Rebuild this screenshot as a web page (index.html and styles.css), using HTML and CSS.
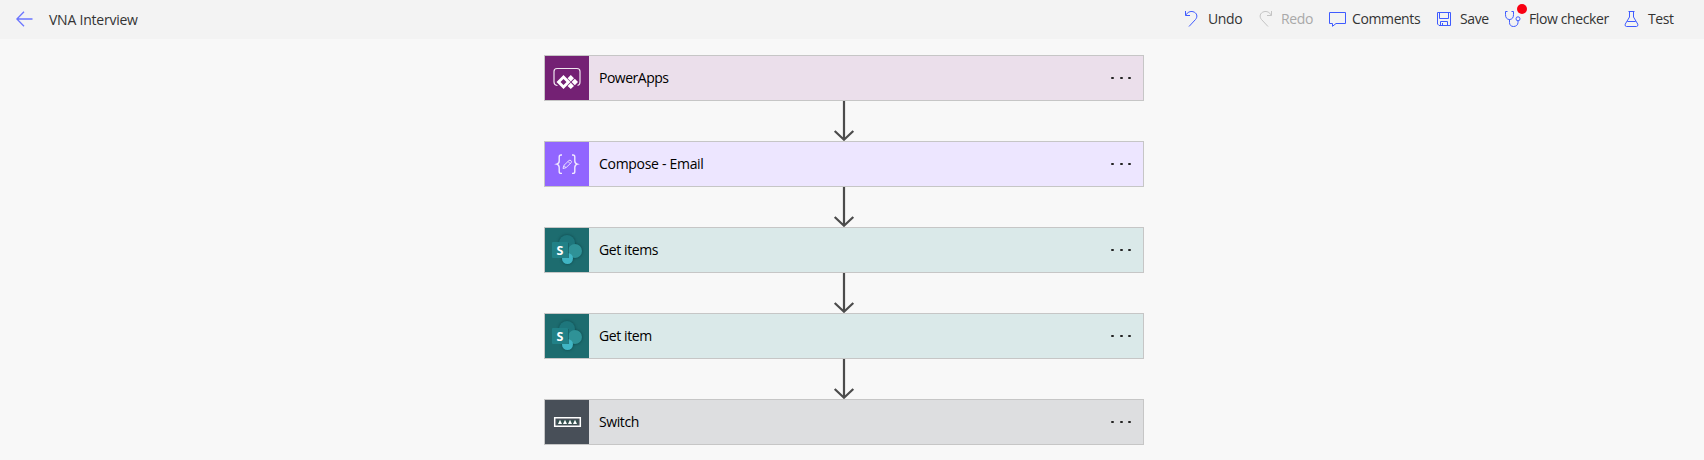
FILE: index.html
```html
<!DOCTYPE html>
<html lang="en">
<head>
<meta charset="utf-8">
<title>VNA Interview</title>
<link rel="stylesheet" href="styles.css">
</head>
<body>
<header class="topbar">
  <svg class="back" width="18" height="16" viewBox="0 0 18 16"><path d="M8 .8.9 8 8 15.2M1 8h15.500"/></svg>
  <h1 class="title">VNA Interview</h1>
  <nav class="commands">
    <button class="command undo"><svg width="18" height="18" viewBox="0 0 18 18"><path d="M1.500 1v4.500H6M1.800 5.200C3.500 2 6.500 1 9 1.700c4 1 5 5 2.500 7.800L5 16.500"/></svg><span>Undo</span></button>
    <button class="command redo"><svg width="18" height="18" viewBox="0 0 18 18"><path d="M13.500 1v4.500H9M13.200 5.200C11.500 2 8.500 1 6 1.700c-4 1-5 5-2.500 7.800l6.500 7"/></svg><span>Redo</span></button>
    <button class="command comments"><svg width="18" height="18" viewBox="0 0 18 18"><path d="M1.500 2.500h16v11H8L4.500 16.300V13.500h-3z"/></svg><span>Comments</span></button>
    <button class="command save"><svg width="18" height="18" viewBox="0 0 18 18"><path d="M1.500 2.500h13v13H3L1.500 14zM3.500 2.500v6h9v-6M4.500 15.500v-4h7v4M6.500 13v2.500"/></svg><span>Save</span></button>
    <button class="command checker"><svg width="18" height="18" viewBox="0 0 18 18"><path d="M3.500 1.500h-2v3.200c0 3 1.500 4.800 4 4.800s4-1.800 4-4.800V1.500h-2M5.500 9.500v3c0 2.500 1.500 4 4 4s4.500-1.500 4.500-4v-1.700"/><circle cx="14" cy="8.800" r="2"/></svg><span>Flow checker</span><i class="alert"></i></button>
    <button class="command test"><svg width="18" height="18" viewBox="0 0 18 18"><path d="M4.500 1.500h6M5.500 1.500v5.500L1.200 14.200Q.7 16.500 2.500 16.500h10Q14.300 16.500 13.800 14.200L9.500 7V1.500M3.300 11.500h8.400"/></svg><span>Test</span></button>
  </nav>
</header>
<main class="flow">
  <section class="card powerapps">
    <div class="icon"><svg width="44" height="44" viewBox="0 0 44 44"><path d="M12.500 29.500H12q-3-.5-3-3.500V15.500Q9 12.500 12 12.500h20q3 0 3 3V26q0 3-2.500 3.500" fill="none" stroke="#efe4ef" stroke-width="1.200"/><path fill="#fff" fill-rule="evenodd" d="m18.500 19 7 7-7 7-7-7zm0 4-3 3 3 3 3-3zM25.800 19l3.200 3.200-3.200 3.200-3.200-3.200zM29.800 22.800l3.200 3.200-3.200 3.200-3.200-3.200zM25.800 26.700l3.200 3.200-3.200 3.200-3.200-3.200z"/></svg></div>
    <h2>PowerApps</h2><span class="more"><i></i><i></i><i></i></span>
  </section>
  <svg class="arrow" width="22" height="40" viewBox="0 0 22 40"><path d="M11 0v38M1.700 30l9.300 8.700L20.300 30"/></svg>
  <section class="card compose">
    <div class="icon"><svg width="44" height="44" viewBox="0 0 44 44"><path d="M17 13h-1q-1.800 0-1.800 2v4q0 2.500-2.500 3.200 2.500.7 2.500 3.200v4q0 2 1.800 2h1M27 13h1q1.800 0 1.800 2v4q0 2.500 2.500 3.200-2.500.7-2.500 3.200v4q0 2-1.800 2h-1" fill="none" stroke="#f1e9ff" stroke-width="1.400"/><path d="m18 26.500.8-3 5.200-5q1-.8 2 .2t.2 2l-5.200 5zM18.800 23.500l2.200 2.200M23 19.500l2.200 2.200" fill="none" stroke="#e9deff"/></svg></div>
    <h2>Compose - Email</h2><span class="more"><i></i><i></i><i></i></span>
  </section>
  <svg class="arrow" width="22" height="40" viewBox="0 0 22 40"><path d="M11 0v38M1.700 30l9.300 8.700L20.300 30"/></svg>
  <section class="card sharepoint">
    <div class="icon"><svg width="44" height="44" viewBox="0 0 44 44"><g class="shade"><circle cx="22" cy="15" r="8" fill="#1e767c"/><circle cx="30" cy="23" r="7" fill="#2f9297"/><circle cx="22.500" cy="30.500" r="5.500" fill="#40b5c4"/></g><path d="M10 15h14v15H10z" fill="#155b60" opacity=".65"/><rect x="7" y="14" width="16" height="16" rx="1" fill="#218187"/><text class="letter" x="15" y="26.500">S</text></svg></div>
    <h2>Get items</h2><span class="more"><i></i><i></i><i></i></span>
  </section>
  <svg class="arrow" width="22" height="40" viewBox="0 0 22 40"><path d="M11 0v38M1.700 30l9.300 8.700L20.300 30"/></svg>
  <section class="card sharepoint">
    <div class="icon"><svg width="44" height="44" viewBox="0 0 44 44"><g class="shade"><circle cx="22" cy="15" r="8" fill="#1e767c"/><circle cx="30" cy="23" r="7" fill="#2f9297"/><circle cx="22.500" cy="30.500" r="5.500" fill="#40b5c4"/></g><path d="M10 15h14v15H10z" fill="#155b60" opacity=".65"/><rect x="7" y="14" width="16" height="16" rx="1" fill="#218187"/><text class="letter" x="15" y="26.500">S</text></svg></div>
    <h2>Get item</h2><span class="more"><i></i><i></i><i></i></span>
  </section>
  <svg class="arrow" width="22" height="40" viewBox="0 0 22 40"><path d="M11 0v38M1.700 30l9.300 8.700L20.300 30"/></svg>
  <section class="card switch">
    <div class="icon"><svg width="44" height="44" viewBox="0 0 44 44"><path d="M9.700 17.700h25.600v8.600H9.700z" fill="none" stroke="#fff" stroke-width="1.500"/><path d="M12 20h21v4.500H12z" fill="#35514f"/><path fill="#fff" d="m15 19.700 2 4.300h-4zm5 0 2 4.300h-4zm5 0 2 4.300h-4zm5 0 2 4.300h-4z"/></svg></div>
    <h2>Switch</h2><span class="more"><i></i><i></i><i></i></span>
  </section>
</main>
</body>
</html>
```
FILE: styles.css
```css
* { box-sizing: border-box; }
body { margin: 0; height: 460px; overflow: hidden; background: #f8f8f8; color: #111; font: 14px/20px "Open Sans", "Noto Sans", sans-serif; }
.topbar { height: 39px; display: flex; align-items: center; padding: 0 16px; background: #f3f3f3; color: #333; }
.topbar svg { fill: none; stroke: #3f5bff; stroke-width: 1; flex: none; }
.topbar .back { stroke: #6b75ff; stroke-width: 1.300; margin-bottom: 1px; }
.title { margin: 1px 0 0 15px; font-size: 14px; font-weight: 370; letter-spacing: -.23px; white-space: nowrap; }
.commands { display: flex; margin: 0 0 1px auto; }
.command { display: flex; align-items: center; position: relative; padding: 0; border: 0; background: none; color: #333; font: inherit; font-weight: 370; letter-spacing: -.38px; white-space: nowrap; text-align: left; }
.command span { margin-left: 6px; }
.command.undo { width: 74px; }
.command.redo { width: 70px; color: #a9a9a9; }
.command.redo span { margin-left: 5px; }
.command.redo svg { stroke: #c4c4c4; }
.command.comments { width: 108px; }
.command.save { width: 68px; }
.command.checker { width: 120px; }
.command.checker span { margin-left: 7px; }
.command.test { width: 64px; }
.alert { position: absolute; left: 13px; top: -5px; width: 10px; height: 10px; border-radius: 50%; background: #f80012; }
.flow { display: flex; flex-direction: column; align-items: center; width: 600px; margin: 16px 0 0 544px; }
.card { display: flex; align-items: center; width: 600px; height: 46px; flex: none; border: 1px solid #c6c6c6; }
.card h2 { margin: 0 0 0 10px; flex: 1; font-size: 14px; font-weight: 370; line-height: 20px; color: #000; letter-spacing: -.4px; }
.card.powerapps h2 { letter-spacing: -.5px; }
.card.compose h2 { letter-spacing: -.3px; }
.icon { width: 44px; height: 44px; }
.icon svg { display: block; }
.more { display: flex; gap: 5.300px; margin-right: 12px; }
.more i { width: 3px; height: 2px; border-radius: 1px; background: #222; }
.powerapps { background: #ebdfeb; }
.powerapps .icon { background: #742174; }
.compose { background: #ede6ff; }
.compose .icon { background: #9165ff; }
.sharepoint { background: #dae9e9; }
.sharepoint .icon { background: #1d6c6f; }
.switch { background: #dddee0; }
.switch .icon { background: #484f58; }
.shade { filter: drop-shadow(0 0 1.500px #0d4549); }
.letter { fill: #fff; font: 700 12.500px "Open Sans", sans-serif; text-anchor: middle; }
.arrow { display: block; flex: none; fill: none; stroke: #4b4b4b; stroke-width: 2.200; }
```
